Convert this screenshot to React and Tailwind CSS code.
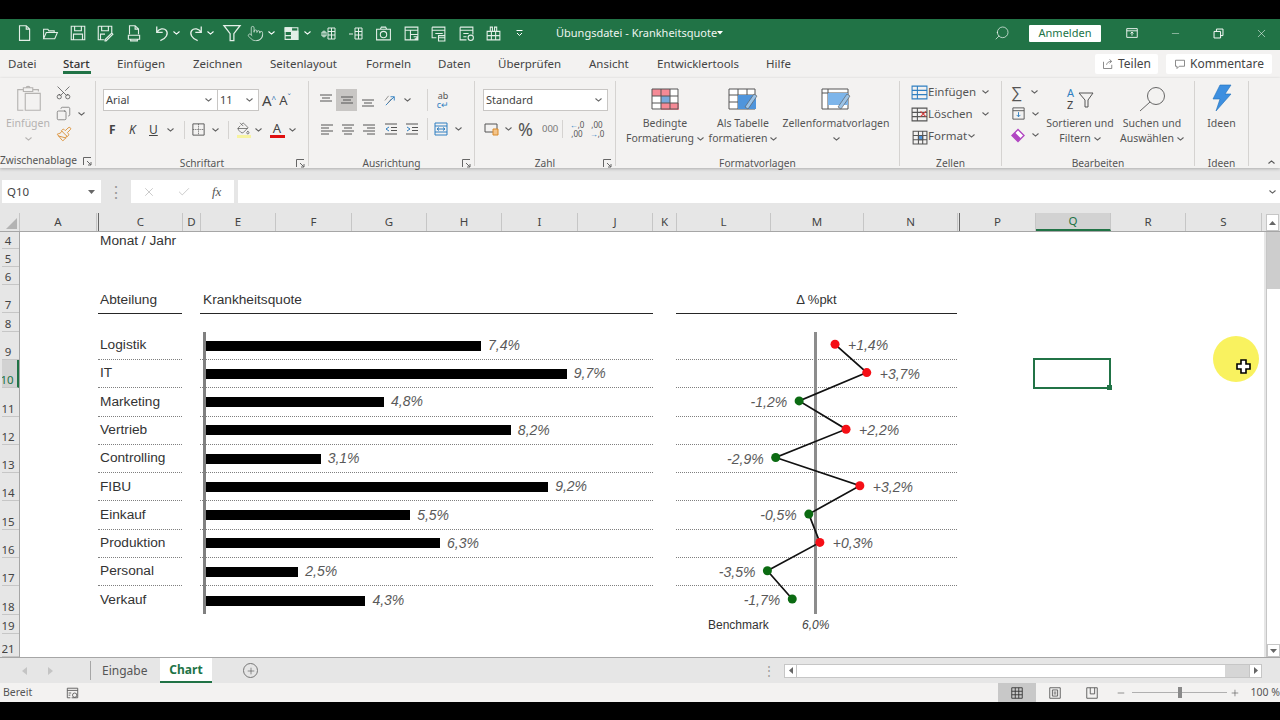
import React from "react";
import { Scissors, Copy, Paintbrush, PaintBucket, Pointer, Search, Minus, X, Check, Plus } from "lucide-react";

const rows = [
  { name: "Logistik", quote: 7.4, delta: 1.4 },
  { name: "IT", quote: 9.7, delta: 3.7 },
  { name: "Marketing", quote: 4.8, delta: -1.2 },
  { name: "Vertrieb", quote: 8.2, delta: 2.2 },
  { name: "Controlling", quote: 3.1, delta: -2.9 },
  { name: "FIBU", quote: 9.2, delta: 3.2 },
  { name: "Einkauf", quote: 5.5, delta: -0.5 },
  { name: "Produktion", quote: 6.3, delta: 0.3 },
  { name: "Personal", quote: 2.5, delta: -3.5 },
  { name: "Verkauf", quote: 4.3, delta: -1.7 },
];

const fmt = (v) => v.toFixed(1).replace(".", ",") + "%";
const signed = (v) => (v > 0 ? "+" : "") + fmt(v);
const pointX = (d) => 139.7 + d * 13.8;
const pointY = (i) => 12.3 + i * 28.3;

const Chev = ({ className = "text-[#5f5f5f]" }) => (
  <svg width="7" height="4" viewBox="0 0 7 4" className={className}>
    <path d="M.5.5l3 2.600 3-2.600" fill="none" stroke="currentColor" strokeWidth="1.100" />
  </svg>
);

const Launcher = () => (
  <svg width="9" height="9" viewBox="0 0 9 9" className="text-[#666]">
    <path d="M.5 8V.5H8M4 4l4 4M8 5v3H5" fill="none" stroke="currentColor" strokeWidth="1" />
  </svg>
);

const Ic = ({ size = 18, children, className = "" }) => (
  <svg width={size} height={size} viewBox="0 0 16 16" fill="none" stroke="currentColor" strokeWidth="1" className={className}>
    {children}
  </svg>
);

const Q = ({ w, children }) => <div className={`flex ${w} shrink-0 justify-center`}>{children}</div>;

const grid = "M2 2.500h12v11H2zM2 6h12M2 10h12M8 2.500v11";

const TitleBar = () => (
  <div className="flex h-[31px] shrink-0 items-center bg-[#217346] pb-[3px] pl-[10px] text-white">
    <div className="flex items-center text-[#e4efe8]">
      <Q w="w-[27px]"><Ic><path d="M4 1.500h6l3 3v10H4zM10 1.500v3h3" /></Ic></Q>
      <Q w="w-[27px]"><Ic size={17}><path d="M1.500 13V4h4l1 1.500h5V7M1.500 13h10.500l2.500-6H4z" /></Ic></Q>
      <Q w="w-[27px]"><Ic><path d="M2 2h12v12H2zM5 2v4h6V2M4 14V9h8v5" /></Ic></Q>
      <Q w="w-[28px]"><Ic><path d="M2 2h12v6M5 2v4h6V2M2 2v12h5M4 14V9h4M8 14l6-6 1 1-6 6H8z" /></Ic></Q>
      <Q w="w-[30px]"><Ic><path d="M4 9V1.500h5l3 3V9M9 1.500v3h3M3 10h10v3.500H3zM5 13.500h6v1.500H5z" /></Ic></Q>
      <Q w="w-[24px]"><Ic size={19}><path d="M4 2v5h5M4 7c2-3 6-4 8-1.500 2 2.500 0 7-5 8.500" strokeWidth="1.100" /></Ic></Q>
      <Q w="w-[6px]"><Chev className="shrink-0 text-white" /></Q>
      <div className="ml-[6px]"><Q w="w-[22px]"><Ic size={19}><path d="M12 2v5H7M12 7C10 4 6 3 4 5.500 2 8 4 12.500 9 14" strokeWidth="1.100" /></Ic></Q></div>
      <Q w="w-[6px]"><Chev className="shrink-0 text-white" /></Q>
      <Q w="w-[38px]"><Ic size={20}><path d="M1.500 2h13L9.500 8.500V14h-3V8.500z" /></Ic></Q>
      <Q w="w-[8px]"><Pointer size={17} strokeWidth={1} className="shrink-0" /></Q>
      <Q w="w-[24px]"><Chev className="text-white" /></Q>
      <Q w="w-[16px]">
        <Ic size={17} className="shrink-0"><path d={grid} /><path d="M2 2.500h6V6H2zM8 6h6v7.500H8z" fill="currentColor" /></Ic>
      </Q>
      <Q w="w-[16px]"><Chev className="text-white" /></Q>
      <Q w="w-[28px]"><Ic size={16}><path d="M7 3h7v11H7zM7 6.500h7M7 10h7M10.500 3v11M1 7h4v4H1zM3 5.500v7" /></Ic></Q>
      <Q w="w-[26px]"><Ic size={16}><path d="M7 3h7v11H7zM7 6.500h7M7 10h7M10.500 3v11M1 9h4" /></Ic></Q>
      <Q w="w-[28px]"><Ic size={17}><path d="M1.500 4h13v10h-13zM5 4l1-2h4l1 2" /><circle cx="8" cy="9" r="3" /></Ic></Q>
      <Q w="w-[28px]"><Ic size={17}><path d="M2 2h12v12H2zM2 5h12M7 5v9M7 9h7M10 11h3v2h-2" /></Ic></Q>
      <Q w="w-[26px]"><Ic size={17}><path d="M2 2h12v10H8M2 2v10h4M2 5h12M5 8h7M8 10h6v5H8z" /></Ic></Q>
      <Q w="w-[30px]"><Ic size={17}><path d="M2 2h12v7M2 2v12h6M2 5h12M5 8h5M5 11h3" /><circle cx="12" cy="12" r="2.500" /></Ic></Q>
      <Q w="w-[24px]"><Ic size={17}><path d="M2 6h12v8H2zM2 10h12M6 6v8M10 6v8M5 2h2v4H5zM9 2h2v4H9z" /></Ic></Q>
      <Q w="w-[28px]"><svg width="7" height="6" viewBox="0 0 7 6"><path d="M.5.500h6M1 3l2.500 2.500L6 3" stroke="white" fill="none" /></svg></Q>
    </div>
    <span className="ml-[23px] w-[158px] text-[11px] whitespace-nowrap text-[#eef5f0]">Übungsdatei - Krankheitsquote</span>
    <svg width="6" height="4" viewBox="0 0 6 4" className="ml-[3px]"><path d="M0 0h6L3 3.500z" fill="white" /></svg>
    <Search size={16} strokeWidth={1} className="ml-[271px] -scale-x-100" />
    <div className="ml-[19px] flex h-[17px] w-[72px] items-center justify-center rounded-[1px] bg-white text-[11px] text-[#217346]">Anmelden</div>
    <Ic size={14} className="ml-[24px]"><path d="M2 3h12v10H2zM2 5.500h12M8 11V7M6.300 8.500L8 7l1.700 1.500" /></Ic>
    <Minus size={11} strokeWidth={1} className="ml-[31px]" />
    <Ic size={11} className="ml-[32px]"><path d="M1.500 5h9.500v9.500H1.500zM5 5V1.500h9.500V11H11" strokeWidth="1.400" /></Ic>
    <X size={13} strokeWidth={1} className="ml-[31px]" />
  </div>
);

const tabs = [
  ["Datei", "w-[55px]"],
  ["Start", "w-[54px]"],
  ["Einfügen", "w-[76px]"],
  ["Zeichnen", "w-[77px]"],
  ["Seitenlayout", "w-[96px]"],
  ["Formeln", "w-[72px]"],
  ["Daten", "w-[60px]"],
  ["Überprüfen", "w-[91px]"],
  ["Ansicht", "w-[68px]"],
  ["Entwicklertools", "w-[109px]"],
  ["Hilfe", "w-[40px]"],
];

const TabRow = () => (
  <div className="flex h-[28px] shrink-0 items-center bg-[#f3f2f1] pl-[8px] text-[11.500px] text-[#444]">
    {tabs.map(([label, w]) => (
      <div key={label} className={`${w} relative shrink-0 whitespace-nowrap`}>
        <span className={label === "Start" ? "font-medium text-[#333]" : ""}>{label}</span>
        {label === "Start" && <div className="absolute top-[16px] left-0 h-[3px] w-[28px] bg-[#217346]" />}
      </div>
    ))}
    <div className="ml-[289px] flex h-[20px] w-[63px] items-center justify-center gap-1 rounded-[2px] bg-white text-[12px] text-[#444]">
      <Ic size={12} className="text-[#666]"><path d="M2 5v9h11V9M6 9c1-3 3-4.500 6-4.500M10 2l3 2.500L10 7" /></Ic>
      Teilen
    </div>
    <div className="ml-[8px] flex h-[20px] w-[106px] items-center justify-center gap-1 rounded-[2px] bg-white text-[12px] text-[#444]">
      <Ic size={12} className="text-[#666]"><path d="M2 3h12v8H7l-3 3v-3H2z" /></Ic>
      Kommentare
    </div>
  </div>
);

const Group = ({ w, label, launcher, children }) => (
  <div className={`${w} flex h-[85px] shrink-0 flex-col border-r border-[#d5d3d1]`}>
    <div className="flex-1">{children}</div>
    <div className="grid h-[10px] grid-cols-[1fr_auto_1fr] items-center text-[10.200px] text-[#555]">
      <span />
      <span>{label}</span>
      <span className="flex justify-end pr-[3px]">{launcher && <Launcher />}</span>
    </div>
  </div>
);

const Box = ({ w, text }) => (
  <div className={`${w} flex h-[22px] items-center justify-between border border-[#c8c6c4] bg-white pr-[5px] pl-[2px] text-[11px] text-[#444]`}>
    {text}
    <Chev className="text-[#666]" />
  </div>
);

const MenuRow = ({ label, w, children }) => (
  <div className="flex h-[22px] items-center text-[11.500px] text-[#555]">
    <div className="flex w-[20px] justify-center">{children}</div>
    <span className="ml-[-1px]">{label}</span>
    <div className={w}><Chev /></div>
  </div>
);

const Lines = ({ d }) => (
  <Ic size={16} className="text-[#555]"><path d={d} /></Ic>
);

const Ribbon = () => (
  <div className="z-10 flex h-[90px] shrink-0 bg-[#f3f2f1] pt-[3px] shadow-[0_1px_3px_rgba(0,0,0,0.25)]">
    <div className="flex h-[85px] w-[96px] shrink-0 flex-col border-r border-[#d5d3d1]">
      <div className="flex flex-1">
        <div className="flex w-[56px] flex-col items-center pt-[3px] text-[#b5b3b1]">
          <Ic size={30} className="ml-[2px]"><path d="M5 3h-3v11h3M10 3h3v1M5 2h5v2H5zM6.500 2c0-1 2-1 2 0M6 5h8v9H6z" strokeWidth="0.600" /></Ic>
          <span className="mt-[2px] text-[10.500px]">Einfügen</span>
          <Chev className="mt-[5px] text-[#b5b3b1]" />
        </div>
        <div className="flex flex-col items-start gap-[5px] pt-[3px] text-[#555]">
          <Scissors size={17} strokeWidth={1} className="ml-[-1px] rotate-[-90deg] text-[#444]" />
          <div className="flex items-center gap-[7px]">
            <Copy size={15} strokeWidth={1} className="-scale-x-100" />
            <Chev />
          </div>
          <Paintbrush size={16} strokeWidth={1.300} className="text-[#d98a2b]" />
        </div>
      </div>
      <div className="flex h-[10px] items-center justify-between pr-[3px] text-[10.200px] whitespace-nowrap text-[#555]">
        <span>Zwischenablage</span>
        <Launcher />
      </div>
    </div>

    <Group w="w-[213px]" label="Schriftart" launcher>
      <div className="flex items-center pt-[8px] pl-[7px]">
        <Box w="w-[115px]" text="Arial" />
        <Box w="w-[41px] border-l-0" text="11" />
        <span className="ml-[3px] text-[15px] text-[#444]">A<sup className="text-[8px] text-[#2b6cb0]">^</sup></span>
        <span className="ml-[3px] text-[13px] text-[#444]">A<sup className="text-[8px] text-[#2b6cb0]">ˇ</sup></span>
      </div>
      <div className="mt-[7px] flex h-[22px] items-center pl-[13px] text-[12px] text-[#444]">
        <span className="w-[20px] font-bold">F</span>
        <span className="w-[20px] italic">K</span>
        <span className="w-[18px] underline">U</span>
        <div className="w-[16px]"><Chev /></div>
        <div className="mr-[6px] ml-[1px] h-[18px] w-px bg-[#d5d3d1]" />
        <Ic size={15} className="text-[#555]"><path d="M2 2h12v12H2z" /><path d="M8 2v12M2 8h12" strokeDasharray="1 1" /></Ic>
        <div className="ml-[6px] w-[14px]"><Chev /></div>
        <div className="mr-[6px] ml-[2px] h-[18px] w-px bg-[#d5d3d1]" />
        <div className="flex w-[17px] flex-col items-center">
          <PaintBucket size={13} strokeWidth={1.200} />
          <div className="h-[3px] w-[14px] bg-[#f7f3a0]" />
        </div>
        <div className="ml-[3px] w-[14px]"><Chev /></div>
        <div className="flex w-[16px] flex-col items-center leading-[14px]">
          <span className="text-[13px]">A</span>
          <div className="h-[3px] w-[15px] bg-[#e01010]" />
        </div>
        <div className="ml-[4px]"><Chev /></div>
      </div>
    </Group>

    <Group w="w-[166px]" label="Ausrichtung" launcher>
      <div className="flex items-center pt-[8px] pl-[7px]">
        <div className="flex h-[22px] w-[20px] items-center justify-center"><Lines d="M2 3h12M4 6h8M2 9h12" /></div>
        <div className="flex h-[22px] w-[21px] items-center justify-center bg-[#c8c6c4]"><Lines d="M2 5h12M4 8h8M2 11h12" /></div>
        <div className="flex h-[22px] w-[22px] items-center justify-center"><Lines d="M2 8h12M4 11h8M2 14h12" /></div>
        <div className="ml-[3px] flex w-[17px] justify-center text-[#2f7fc1]"><Ic size={15}><path d="M3 13l9-9M8 4h4v4" /><path d="M2 8l4-5M5 11l4-5" stroke="#777" strokeWidth="0.800" /></Ic></div>
        <div className="ml-[5px]"><Chev /></div>
        <div className="mr-[5px] ml-[16px] h-[22px] w-px bg-[#d5d3d1]" />
        <div className="flex w-[20px] flex-col items-center text-[9px] leading-[9px] text-[#555]">
          <span>ab</span>
          <span className="text-[#2f7fc1]">c↵</span>
        </div>
      </div>
      <div className="mt-[7px] flex h-[22px] items-center pl-[7px]">
        <div className="flex w-[21px] justify-center"><Lines d="M2 4h12M2 7h8M2 10h12M2 13h8" /></div>
        <div className="flex w-[21px] justify-center"><Lines d="M2 4h12M4 7h8M2 10h12M4 13h8" /></div>
        <div className="flex w-[22px] justify-center"><Lines d="M2 4h12M6 7h8M2 10h12M6 13h8" /></div>
        <div className="flex w-[21px] justify-center text-[#2f7fc1]"><Ic size={16}><path d="M2 3h12M8 6.500h6M8 9.500h6M2 13h12" stroke="#555" /><path d="M6 6L3 8l3 2" /></Ic></div>
        <div className="flex w-[21px] justify-center text-[#2f7fc1]"><Ic size={16}><path d="M2 3h12M8 6.500h6M8 9.500h6M2 13h12" stroke="#555" /><path d="M3 6l3 2-3 2" /></Ic></div>
        <div className="mr-[3px] ml-[5px] h-[22px] w-px bg-[#d5d3d1]" />
        <div className="flex w-[20px] justify-center text-[#2f7fc1]"><Ic size={16}><path d="M2 2h12v12H2zM2 5h12M2 11h12" /><path d="M4 8h8M6 6.500L4 8l2 1.500M10 6.500L12 8l-2 1.500" /></Ic></div>
        <div className="ml-[4px]"><Chev /></div>
      </div>
    </Group>

    <Group w="w-[141px]" label="Zahl" launcher>
      <div className="pt-[8px] pl-[8px]"><Box w="w-[125px]" text="Standard" /></div>
      <div className="mt-[7px] flex h-[22px] items-center pl-[9px] text-[#555]">
        <Ic size={16}><path d="M1 3h12v8H1z" /><path d="M9 8h5v6H9z" stroke="#d98a2b" fill="#f3c48a" /></Ic>
        <div className="ml-[5px] w-[12px]"><Chev /></div>
        <span className="ml-[1px] w-[24px] text-[18px] leading-none">%</span>
        <span className="w-[19px] text-[9.500px] text-[#777]">000</span>
        <div className="mr-[4px] ml-[1px] h-[18px] w-px bg-[#d5d3d1]" />
        <span className="w-[20px] text-center text-[8px] leading-[9px]"><span className="text-[#2f7fc1]">←</span>,0<br />,00</span>
        <span className="w-[20px] text-center text-[8px] leading-[9px]">,00<br /><span className="text-[#2f7fc1]">→</span>,0</span>
      </div>
    </Group>

    <Group w="w-[284px]" label="Formatvorlagen">
      <div className="flex pt-[7px] text-center text-[10.500px] leading-[15px] text-[#555]">
        <div className="ml-[8px] flex w-[82px] flex-col items-center whitespace-nowrap">
          <svg width="28" height="22" viewBox="0 0 28 22">
            <path d="M1 1h27v21H1z" fill="#fff" />
            <path d="M1 1h18v7H1zM10 8h9v7h-9zM10 15h18v7H10z" fill="#f58a96" />
            <path d="M10 8h9v7h-9z" fill="#7aa9db" />
            <path d="M1 1h26v20H1zM1 8h26M1 15h26M10 1v20M19 1v20" fill="none" stroke="#555" />
          </svg>
          <span className="mt-[6px]">Bedingte</span>
          <span className="flex items-center gap-[3px]">Formatierung <Chev /></span>
        </div>
        <div className="ml-[-1px] flex w-[76px] flex-col items-center whitespace-nowrap">
          <svg width="30" height="24" viewBox="0 0 30 24" className="mt-[-1px]">
            <path d="M1 2h26v20H1zM1 8h26M1 15h26M10 2v20M19 2v20" fill="#fff" stroke="#555" />
            <path d="M10 8h18v14H10z" fill="#4f95dc" />
            <path d="M17 20l9-13 3 2-9 13z" fill="#9cc3e6" stroke="#555" strokeWidth="0.600" />
          </svg>
          <span className="mt-[5px]">Als Tabelle</span>
          <span className="flex items-center gap-[3px]">formatieren <Chev /></span>
        </div>
        <div className="ml-[2px] flex w-[106px] flex-col items-center whitespace-nowrap">
          <svg width="30" height="24" viewBox="0 0 30 24" className="mt-[-1px]">
            <path d="M1 2h26v20H1zM1 6h26M7 2v20" fill="#fff" stroke="#555" />
            <path d="M7 6h20v12H7z" fill="#7db5ea" />
            <path d="M17 20l9-13 3 2-9 13z" fill="#9cc3e6" stroke="#555" strokeWidth="0.600" />
          </svg>
          <span className="mt-[5px]">Zellenformatvorlagen</span>
          <span className="flex h-[15px] items-center"><Chev /></span>
        </div>
      </div>
    </Group>

    <Group w="w-[102px]" label="Zellen">
      <div className="pl-[9px]">
        <MenuRow label="Einfügen" w="ml-[6px]"><Ic size={17} className="text-[#2f7fc1]"><path d="M1 2h14v12H1zM1 6h14M1 10h14M6 2v12" /></Ic></MenuRow>
        <MenuRow label="Löschen" w="ml-[9px]"><Ic size={17} className="text-[#555]"><path d="M1 2h14v12H1zM1 6h14M1 10h14M6 2v12" /><path d="M9 5l5 5M14 5l-5 5" stroke="#d83b3b" /></Ic></MenuRow>
        <MenuRow label="Format" w="ml-[1px]"><Ic size={17} className="text-[#555]"><path d="M2 3h13v12H2zM2 7h13M2 11h13M7 3v12M11 3v12" /><path d="M7 7h4v4H7z" fill="#4f95dc" /></Ic></MenuRow>
      </div>
    </Group>

    <Group w="w-[193px]" label="Bearbeiten">
      <div className="flex">
        <div className="flex w-[44px] flex-col pl-[9px]">
          <div className="flex h-[22px] items-center gap-[6px]"><span className="w-[14px] text-[16px] leading-none text-[#555]">∑</span><Chev /></div>
          <div className="flex h-[21px] items-center gap-[6px]"><Ic size={15} className="text-[#555]"><path d="M2 2h12v12H2zM2 5h12" /><path d="M8 6.500v5M6 9.500l2 2 2-2" stroke="#2f7fc1" /></Ic><Chev /></div>
          <div className="flex h-[22px] items-center gap-[6px]"><svg width="15" height="15" viewBox="0 0 15 15"><path d="M7 1.500l6 6-6 6-6-6z" fill="#fff" stroke="#b146c2" strokeWidth="1.400" /><path d="M1 7.500L4 4.500l6 6-3 3z" fill="#b146c2" /></svg><Chev /></div>
        </div>
        <div className="flex w-[68px] flex-col items-center pt-[6px] text-[10.500px] leading-[15px] whitespace-nowrap text-[#555]">
          <svg width="32" height="24" viewBox="0 0 32 24">
            <text x="3" y="10" fontSize="11" fill="#2f7fc1" fontFamily="Noto Sans">A</text>
            <text x="3" y="22" fontSize="11" fill="#444" fontFamily="Noto Sans">Z</text>
            <path d="M15 6h14l-5 7v7h-3v-7z" fill="none" stroke="#555" />
          </svg>
          <span className="mt-[5px]">Sortieren und</span>
          <span className="flex items-center gap-[3px]">Filtern <Chev /></span>
        </div>
        <div className="ml-[2px] flex w-[72px] flex-col items-center pt-[5px] text-[10.500px] leading-[15px] whitespace-nowrap text-[#555]">
          <svg width="30" height="26" viewBox="0 0 30 26">
            <circle cx="19" cy="10" r="8.500" fill="none" stroke="#666" />
            <path d="M13 16L3 25" stroke="#666" />
          </svg>
          <span className="mt-[4px]">Suchen und</span>
          <span className="flex items-center gap-[3px]">Auswählen <Chev /></span>
        </div>
      </div>
    </Group>

    <Group w="w-[54px]" label="Ideen">
      <div className="flex flex-col items-center pt-[3px] text-[10.500px] text-[#555]">
        <svg width="24" height="28" viewBox="0 0 24 28">
          <path d="M10 1h11l-6 9h6L6 27l4-12H3z" fill="#3d8fe0" stroke="#1e6fb8" strokeWidth="0.600" />
        </svg>
        <span className="mt-[4px]">Ideen</span>
      </div>
    </Group>
    <div className="flex flex-1 items-end justify-end pr-[5px] pb-[4px]">
      <Chev className="rotate-180 text-[#555]" />
    </div>
  </div>
);

const FormulaRow = () => (
  <div className="mt-[12px] flex h-[23px] shrink-0 items-stretch pl-[2px]">
    <div className="flex w-[99px] items-center justify-between bg-white pr-[6px] pl-[5px] text-[11.500px] text-[#444]">
      Q10
      <svg width="7" height="4" viewBox="0 0 7 4"><path d="M0 0h7L3.500 4z" fill="#666" /></svg>
    </div>
    <div className="flex w-[30px] items-center justify-center text-[#9a9a9a]">⋮</div>
    <div className="flex w-[103px] items-center gap-[21px] bg-white pl-[11px] text-[#c4c4c4]">
      <X size={14} strokeWidth={1.500} />
      <Check size={14} strokeWidth={1.500} />
      <span className="font-['Liberation_Serif',serif] text-[13px] text-[#555] italic">fx</span>
    </div>
    <div className="ml-[4px] flex flex-1 items-center justify-end bg-white pr-[4px]"><Chev /></div>
  </div>
);

const cols = [
  ["A", "w-[77px]"], ["", "w-[2px]"], ["C", "w-[84px]"], ["D", "w-[18px]"], ["E", "w-[75px]"],
  ["F", "w-[76px]"], ["G", "w-[75px]"], ["H", "w-[75px]"], ["I", "w-[76px]"], ["J", "w-[75px]"],
  ["K", "w-[24px]"], ["L", "w-[94px]"], ["M", "w-[93px]"], ["N", "w-[94px]"], ["", "w-[2px]"],
  ["P", "w-[76px]"], ["Q", "w-[75px]"], ["R", "w-[75px]"], ["S", "w-[76px]"],
];

const ColHeaders = () => (
  <div className="mt-[10px] flex h-[19px] shrink-0 border-b border-[#a6a6a6] pl-[2px]">
    <div className="flex w-[18px] items-end justify-end border-r border-[#c6c6c6] pr-[2px] pb-[2px]">
      <svg width="11" height="11" viewBox="0 0 11 11"><path d="M11 0v11H0z" fill="#b4b4b4" /></svg>
    </div>
    {cols.map(([c, w], i) => (
      <div
        key={i}
        className={`${w} flex shrink-0 items-center justify-center border-r text-[11.500px] ${
          c === "Q" ? "border-b-2 border-r-[#c6c6c6] border-b-[#217346] bg-[#d2d2d2] text-[#217346]" : "border-[#c6c6c6] text-[#444]"
        } ${c === "" ? "border-r-[#666]" : ""}`}
      >
        {c}
      </div>
    ))}
    <div className="ml-[4px] flex h-[17px] w-[13px] items-center justify-center self-end border border-[#c6c6c6] bg-white">
      <svg width="7" height="4" viewBox="0 0 7 4"><path d="M3.500 0L7 4H0z" fill="#666" /></svg>
    </div>
  </div>
);

const rowHeaders = [
  ["4", "h-[17px]"], ["5", "h-[18px]"], ["6", "h-[18px]"], ["7", "h-[28px]"], ["8", "h-[19px]"], ["9", "h-[28px]"],
  ["10", "h-[28.300px]"], ["11", "h-[28.300px]"], ["12", "h-[28.300px]"], ["13", "h-[28.300px]"], ["14", "h-[28.300px]"],
  ["15", "h-[28.300px]"], ["16", "h-[28.300px]"], ["17", "h-[28.300px]"], ["18", "h-[28.300px]"], ["19", "h-[19px]"], ["21", "h-[23px]"],
];

const RowHeaders = () => (
  <div className="w-[18px] shrink-0 overflow-hidden border-r border-[#a6a6a6] bg-[#e6e6e6] text-[11.500px] text-[#444]">
    {rowHeaders.map(([n, h]) => (
      <div
        key={n}
        className={`${h} flex items-end justify-center border-b border-[#c6c6c6] pr-[5px] leading-[15px] ${
          n === "10" ? "border-r-2 border-r-[#217346] bg-[#d2d2d2] text-[#217346]" : ""
        }`}
      >
        {n}
      </div>
    ))}
  </div>
);

const DeltaChart = () => (
  <div className="absolute top-0 left-[656px] h-[282px] w-[281px]">
    <div className="absolute top-0 left-[138px] h-[282px] w-[3px] bg-[#8c8c8c]" />
    <svg width="281" height="282" className="absolute inset-0">
      <polyline
        points={rows.map((r, i) => `${pointX(r.delta)},${pointY(i)}`).join(" ")}
        fill="none"
        stroke="#111"
        strokeWidth="1.700"
      />
      {rows.map((r, i) => (
        <circle key={r.name} cx={pointX(r.delta)} cy={pointY(i)} r="4.500" fill={r.delta > 0 ? "#f50f16" : "#0b6b12"} />
      ))}
    </svg>
    {rows.map((r, i) => (
      <span
        key={r.name}
        className="absolute text-[14px] leading-[16px] whitespace-nowrap text-[#595959] italic"
        style={
          r.delta > 0
            ? { left: pointX(r.delta) + 13, top: pointY(i) - 7 }
            : { right: 281 - pointX(r.delta) + 12, top: pointY(i) - 7 }
        }
      >
        {signed(r.delta)}
      </span>
    ))}
  </div>
);

const Sheet = () => (
  <div className="relative font-['Liberation_Sans',sans-serif] text-[13.700px] text-[#333]">
    <div className="h-[53px] pl-[80px] leading-[18px]">Monat / Jahr</div>
    <div className="flex h-[29px] pl-[78px]">
      <div className="flex w-[84px] items-center border-b border-[#262626] pt-[2px] pl-[2px]">Abteilung</div>
      <div className="ml-[18px] flex w-[453px] items-center border-b border-[#262626] pt-[2px] pl-[3px]">Krankheitsquote</div>
      <div className="ml-[23px] flex w-[281px] items-center justify-center border-b border-[#262626] pt-[2px] text-[13px]">Δ %pkt</div>
    </div>
    <div className="relative mt-[18px]">
      {rows.map((r, i) => {
        const line = i < rows.length - 1 ? "border-b border-dotted border-[#7f7f7f]" : "";
        return (
          <div key={r.name} className={`flex pl-[78px] ${i === 0 ? "h-[28px]" : "h-[28.300px]"}`}>
            <div className={`flex w-[84px] items-center pl-[2px] ${line}`}>{r.name}</div>
            <div className={`ml-[18px] flex w-[453px] items-center pl-[5px] ${line}`}>
              <div className="h-[10px] bg-black" style={{ width: r.quote * 37.3 }} />
              <span className="ml-[7px] text-[14px] text-[#595959] italic">{fmt(r.quote)}</span>
            </div>
            <div className={`ml-[23px] w-[281px] ${line}`} />
          </div>
        );
      })}
      <div className="absolute top-0 left-[183px] h-[282px] w-[3px] bg-[#808080]" />
      <DeltaChart />
    </div>
    <div className="flex h-[20px] items-center pl-[688px] text-[12px]">
      <span className="w-[94px]">Benchmark</span>
      <span className="text-[#444] italic">6,0%</span>
    </div>

    {/* selected cell Q10 */}
    <div className="absolute top-[126px] left-[1013px] h-[31px] w-[78px] border-2 border-[#217346]">
      <div className="absolute right-[-3px] bottom-[-3px] h-[5px] w-[5px] bg-[#217346]" />
    </div>
    {/* recording cursor */}
    <div className="absolute top-[104px] left-[1193px] flex h-[46px] w-[46px] items-center justify-center rounded-full bg-[#f9f25f]">
      <svg width="15" height="15" viewBox="0 0 15 15" className="mt-[14px] ml-[14px]">
        <path d="M5 1h5v4h4v5h-4v4H5v-4H1V5h4z" fill="#fff" stroke="#000" strokeWidth="1.600" />
      </svg>
    </div>
  </div>
);

const VScroll = () => (
  <div className="ml-[2px] flex w-[14px] shrink-0 flex-col border-l border-[#c6c6c6] bg-white">
    <div className="h-[57px] bg-[#cdcdcd]" />
    <div className="flex-1" />
    <div className="flex h-[13px] items-center justify-center border border-[#c6c6c6] bg-white">
      <svg width="7" height="4" viewBox="0 0 7 4"><path d="M0 0h7L3.500 4z" fill="#666" /></svg>
    </div>
  </div>
);

const SheetTabs = () => (
  <div className="flex h-[26px] shrink-0 items-center border-t border-[#a6a6a6] bg-[#e6e6e6] text-[12px] text-[#555]">
    <svg width="5" height="8" viewBox="0 0 5 8" className="ml-[22px]"><path d="M5 0v8L0 4z" fill="#c4c4c4" /></svg>
    <svg width="5" height="8" viewBox="0 0 5 8" className="ml-[21px]"><path d="M0 0v8l5-4z" fill="#c4c4c4" /></svg>
    <div className="ml-[37px] h-[19px] w-px bg-[#a6a6a6]" />
    <span className="ml-[11px] w-[58px]">Eingabe</span>
    <div className="flex h-[25px] w-[52px] items-center justify-center self-start border-b-2 border-[#217346] bg-white font-bold text-[#217346]">Chart</div>
    <div className="ml-[31px] flex h-[15px] w-[15px] items-center justify-center rounded-full border border-[#777]">
      <Plus size={10} strokeWidth={1.500} className="text-[#555]" />
    </div>
    <span className="ml-[505px] text-[#999]">⋮</span>
    <div className="ml-[9px] flex h-[14px] w-[478px] items-center border border-[#c6c6c6]">
      <div className="flex h-full w-[12px] items-center justify-center border-r border-[#c6c6c6] bg-white">
        <svg width="4" height="7" viewBox="0 0 4 7"><path d="M4 0v7L0 3.500z" fill="#666" /></svg>
      </div>
      <div className="h-full w-[428px] bg-white" />
      <div className="h-full flex-1 bg-[#d6d6d6]" />
      <div className="flex h-full w-[12px] items-center justify-center border-l border-[#c6c6c6] bg-white">
        <svg width="4" height="7" viewBox="0 0 4 7"><path d="M0 0v7l4-3.500z" fill="#666" /></svg>
      </div>
    </div>
  </div>
);

const StatusBar = () => (
  <div className="flex h-[19px] shrink-0 items-center bg-[#f3f2f1] pl-[3px] text-[10.500px] text-[#555]">
    <span className="w-[64px]">Bereit</span>
    <Ic size={14}><path d="M1.500 2.500h12v11h-7M1.500 5h12M1.500 2.500v11H5M3 8h3M3 10.500h2" /><circle cx="10" cy="10.500" r="2.500" /></Ic>
    <div className="ml-[918px] flex h-[19px] w-[38px] items-center justify-center bg-[#c8c8c8] text-[#333]">
      <Ic size={14}><path d="M2 2h12v12H2zM2 6h12M2 10h12M6 2v12M10 2v12" /></Ic>
    </div>
    <div className="flex w-[38px] justify-center"><Ic size={14}><path d="M2 2h12v12H2zM5 4.500h6v7H5zM6.500 7h3M6.500 9h3" /></Ic></div>
    <div className="flex w-[37px] justify-center"><Ic size={14}><path d="M2 2h12v12H2zM6 2v7h5V2" /></Ic></div>
    <Minus size={10} strokeWidth={1.500} className="ml-[6px]" />
    <div className="relative ml-[6px] h-px w-[95px] bg-[#b0b0b0]">
      <div className="absolute top-[-5px] left-[46px] h-[11px] w-[4px] bg-[#8a8a8a]" />
    </div>
    <Plus size={10} strokeWidth={1.500} className="ml-[3px]" />
    <span className="ml-[11px] whitespace-nowrap">100 %</span>
  </div>
);

export default function App() {
  return (
    <div className="flex h-[720px] w-[1280px] flex-col overflow-hidden bg-[#e6e6e6] font-['Noto_Sans',sans-serif]">
      <div className="h-[19px] shrink-0 bg-black" />
      <TitleBar />
      <TabRow />
      <Ribbon />
      <FormulaRow />
      <ColHeaders />
      <div className="flex h-[425px] shrink-0 pl-[2px]">
        <RowHeaders />
        <div className="flex-1 overflow-hidden bg-white">
          <Sheet />
        </div>
        <VScroll />
      </div>
      <SheetTabs />
      <StatusBar />
      <div className="flex-1 bg-black" />
    </div>
  );
}
